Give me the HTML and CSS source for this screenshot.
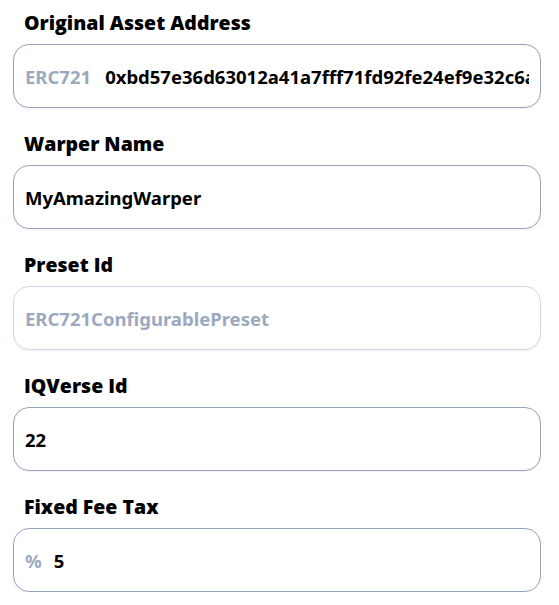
FILE: index.html
```html
<!DOCTYPE html>
<html>
<head>
<meta charset="utf-8">
<link rel="stylesheet" href="styles.css">
</head>
<body>
<form class="form">
  <div class="field">
    <label class="label">Original Asset Address</label>
    <div class="box">
      <span class="addon">ERC721</span>
      <input class="input" value="0xbd57e36d63012a41a7fff71fd92fe24ef9e32c6a3b1" readonly>
    </div>
  </div>
  <div class="field">
    <label class="label">Warper Name</label>
    <div class="box">
      <input class="input" value="MyAmazingWarper" readonly>
    </div>
  </div>
  <div class="field">
    <label class="label">Preset Id</label>
    <div class="box box-disabled">
      <input class="input input-disabled" value="ERC721ConfigurablePreset" disabled>
    </div>
  </div>
  <div class="field">
    <label class="label">IQVerse Id</label>
    <div class="box">
      <input class="input" value="22" readonly>
    </div>
  </div>
  <div class="field">
    <label class="label">Fixed Fee Tax</label>
    <div class="box">
      <span class="addon addon-pct">%</span>
      <input class="input" value="5" readonly>
    </div>
  </div>
</form>
</body>
</html>
```
FILE: styles.css
```css
html, body {
  margin: 0;
  padding: 0;
  background: #ffffff;
}
.form {
  display: flex;
  flex-direction: column;
  gap: 24px;
  padding: 11px 18px 0 13px;
}
.field {
  display: flex;
  flex-direction: column;
  gap: 9px;
}
.label {
  font-family: "Open Sans", "Noto Sans", sans-serif;
  font-weight: 800;
  font-size: 19.5px;
  line-height: 24px;
  color: #000000;
  padding-left: 11px;
}
.box {
  display: flex;
  align-items: center;
  height: 64px;
  box-sizing: border-box;
  border: 1px solid #96a3ba;
  border-radius: 16px;
  padding: 0 11px;
  gap: 14px;
  overflow: hidden;
  box-shadow: 0 1px 2px rgba(15, 23, 42, 0.06);
}
.box-disabled {
  border-color: #cfd8e6;
}
.addon {
  font-family: "Noto Sans", "Open Sans", sans-serif;
  font-weight: 700;
  font-size: 18.5px;
  color: #9ba9c0;
  flex: none;
}
.addon-pct {
  margin-right: -2px;
}
.input {
  flex: 1;
  min-width: 0;
  border: none;
  outline: none;
  background: transparent;
  padding: 0;
  margin: 0;
  font-family: "Noto Sans", "Open Sans", sans-serif;
  font-weight: 700;
  font-size: 18.5px;
  color: #000000;
}
.input-disabled {
  color: #9ba9c0;
  -webkit-text-fill-color: #9ba9c0;
}
```
